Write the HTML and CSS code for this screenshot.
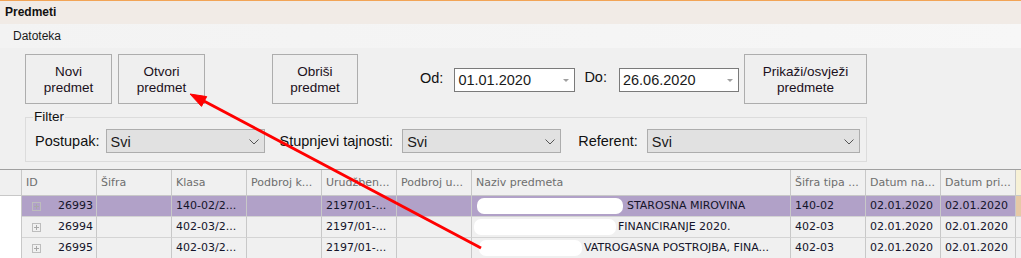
FILE: index.html
```html
<!DOCTYPE html>
<html lang="hr">
<head>
  <meta charset="UTF-8">
  <title>Predmeti</title>
  <link rel="stylesheet" href="styles.css">
</head>
<body>
  <div class="window">
    <div class="titlebar">Predmeti</div>
    <div class="menubar"><span class="menu-item">Datoteka</span></div>

    <div class="toolbar">
      <button class="btn">Novi<br>predmet</button>
      <button class="btn btn-open">Otvori<br>predmet</button>
      <button class="btn btn-delete">Obriši<br>predmet</button>
      <label class="lbl lbl-od">Od:</label>
      <div class="date">01.01.2020<span class="date-arrow"></span></div>
      <label class="lbl lbl-do">Do:</label>
      <div class="date date-do">26.06.2020<span class="date-arrow"></span></div>
      <button class="btn btn-refresh">Prikaži/osvježi<br>predmete</button>
    </div>

    <fieldset class="filter">
      <legend>Filter</legend>
      <label class="lbl">Postupak:</label>
      <div class="combo combo-postupak">Svi<svg class="chev" width="10" height="6" viewBox="0 0 10 6"><polyline points="0.5,0.5 5,5 9.5,0.5" fill="none" stroke="#555" stroke-width="1"/></svg></div>
      <label class="lbl lbl-tajnost">Stupnjevi tajnosti:</label>
      <div class="combo combo-tajnost">Svi<svg class="chev" width="10" height="6" viewBox="0 0 10 6"><polyline points="0.5,0.5 5,5 9.5,0.5" fill="none" stroke="#555" stroke-width="1"/></svg></div>
      <label class="lbl lbl-referent">Referent:</label>
      <div class="combo combo-referent">Svi<svg class="chev" width="10" height="6" viewBox="0 0 10 6"><polyline points="0.5,0.5 5,5 9.5,0.5" fill="none" stroke="#555" stroke-width="1"/></svg></div>
    </fieldset>

    <div class="grid">
      <div class="row head">
        <div class="cell rh"></div>
        <div class="cell">ID</div>
        <div class="cell">Šifra</div>
        <div class="cell">Klasa</div>
        <div class="cell">Podbroj k...</div>
        <div class="cell">Urudžben...</div>
        <div class="cell">Podbroj u...</div>
        <div class="cell">Naziv predmeta</div>
        <div class="cell">Šifra tipa ...</div>
        <div class="cell">Datum na...</div>
        <div class="cell">Datum pri...</div>
        <div class="cell more"></div>
      </div>
      <div class="row selected">
        <div class="cell rh"></div>
        <div class="cell id"><span class="expand"></span>26993</div>
        <div class="cell"></div>
        <div class="cell">140-02/2...</div>
        <div class="cell"></div>
        <div class="cell">2197/01-...</div>
        <div class="cell"></div>
        <div class="cell naziv"><span class="blur blur-1"></span>STAROSNA MIROVINA</div>
        <div class="cell">140-02</div>
        <div class="cell">02.01.2020</div>
        <div class="cell">02.01.2020</div>
        <div class="cell more"></div>
      </div>
      <div class="row">
        <div class="cell rh"></div>
        <div class="cell id"><span class="expand"></span>26994</div>
        <div class="cell"></div>
        <div class="cell">402-03/2...</div>
        <div class="cell"></div>
        <div class="cell">2197/01-...</div>
        <div class="cell"></div>
        <div class="cell naziv"><span class="blur blur-2"></span>FINANCIRANJE 2020.</div>
        <div class="cell">402-03</div>
        <div class="cell">02.01.2020</div>
        <div class="cell">02.01.2020</div>
        <div class="cell more"></div>
      </div>
      <div class="row">
        <div class="cell rh"></div>
        <div class="cell id"><span class="expand"></span>26995</div>
        <div class="cell"></div>
        <div class="cell">402-03/2...</div>
        <div class="cell"></div>
        <div class="cell">2197/01-...</div>
        <div class="cell"></div>
        <div class="cell naziv"><span class="blur blur-3"></span>VATROGASNA POSTROJBA, FINA...</div>
        <div class="cell">402-03</div>
        <div class="cell">02.01.2020</div>
        <div class="cell">02.01.2020</div>
        <div class="cell more"></div>
      </div>
    </div>

    <!-- strelica preko svega -->
    <svg class="arrow" width="1021" height="258" viewBox="0 0 1021 258">
      <line x1="481" y1="248" x2="202" y2="100" stroke="#ff0000" stroke-width="3"/>
      <polygon points="190,94 201.5,106.4 206.7,96.6" fill="#ff0000" stroke="#ff0000" stroke-width="1"/>
    </svg>
  </div>
</body>
</html>
```

FILE: styles.css
```css
* {
  margin: 0;
  padding: 0;
  box-sizing: border-box;
}

body {
  width: 1021px;
  height: 258px;
  overflow: hidden;
  background: #f0f0f0;
  font-family: "Liberation Sans", Arial, sans-serif;
  color: #1a1a1a;
}

.window {
  position: relative;
  height: 258px;
}

.titlebar {
  height: 24px;
  border-top: 1px solid #f2a456;
  background: #f1ebe6;
  font-size: 12px;
  font-weight: bold;
  line-height: 22px;
  padding-left: 5px;
  color: #111;
}

.menubar {
  height: 24px;
  background: linear-gradient(to right, #f3f3f3, #f5f5f5 60%, #f7f7f7);
  font-size: 12px;
  line-height: 24px;
  padding-left: 13px;
}

/* gornji red s gumbima */
.toolbar {
  display: flex;
  align-items: center;
  height: 50px;
  margin-top: 6px;
  padding-left: 25px;
}

.btn {
  width: 87px;
  height: 50px;
  background: #efefef;
  border: 1px solid #adadad;
  font-family: "Liberation Sans", Arial, sans-serif;
  font-size: 13.5px;
  line-height: 16px;
  padding-top: 1px;
  color: #1b1020;
}

.btn-open {
  margin-left: 6px;
}

.btn-delete {
  width: 86px;
  margin-left: 67px;
}

.btn-refresh {
  width: 123px;
  margin-left: 5px;
}

.lbl {
  font-size: 14.5px;
  color: #111;
  white-space: nowrap;
}

.lbl-od {
  margin-left: 62px;
  margin-top: -2px;
}

.lbl-do {
  margin-left: 9px;
  margin-top: -5px;
}

.date {
  position: relative;
  width: 121px;
  height: 24px;
  margin-left: 11px;
  margin-top: 2px;
  background: #fff;
  border: 1px solid #7a7a7a;
  font-size: 14.5px;
  line-height: 22px;
  padding-left: 3px;
}

.date-do {
  width: 120px;
  margin-left: 12px;
}

.date-arrow {
  position: absolute;
  right: 5px;
  top: 10px;
  border-left: 3px solid transparent;
  border-right: 3px solid transparent;
  border-top: 3px solid #a0a0a0;
}

/* filter grupa */
.filter {
  display: flex;
  align-items: center;
  width: 842px;
  height: 53px;
  margin: 5px 0 0 25px;
  border: 1px solid #dcdcdc;
  padding: 0 0 4px 9px;
}

.filter legend {
  font-size: 13.5px;
  line-height: 16px;
  margin-left: -2px;
  padding: 0 1px;
  color: #111;
}

.combo {
  position: relative;
  width: 159px;
  height: 24px;
  margin-left: 6px;
  background: #e1e1e1;
  border: 1px solid #adadad;
  font-size: 14.5px;
  line-height: 24px;
  padding-left: 4px;
}

.combo-tajnost {
  margin-left: 9px;
}

.combo-referent {
  width: 213px;
  margin-left: 9px;
}

.lbl-tajnost {
  margin-left: 15px;
}

.lbl-referent {
  margin-left: 17px;
}

.chev {
  position: absolute;
  right: 5px;
  top: 9px;
}

/* tablica predmeta */
.grid {
  margin-top: 7px;
  border-top: 1px solid #a0a0a0;
  font-family: "DejaVu Sans", Verdana, sans-serif;
  font-size: 11px;
}

.row {
  display: grid;
  grid-template-columns: 22px 75px 75px 75px 75px 75px 75px 319px 75px 75px 75px 1fr;
  height: 21px;
  background: #f0f0f0;
  color: #14142a;
}

.row.head {
  height: 26px;
  color: #6e6e6e;
  border-bottom: 1px solid #c8c8c8;
}

.cell {
  border-right: 1px solid #c8c8c8;
  border-bottom: 1px solid #d4d4d4;
  padding: 0 4px;
  line-height: 20px;
  white-space: nowrap;
  overflow: hidden;
}

.head .cell {
  line-height: 25px;
  border-bottom: none;
}

.row .rh {
  background: #fff;
  border-right: 1px solid #c8c8c8;
  border-bottom: none;
}

.head .rh {
  background: #f0f0f0;
}

.selected {
  background: #b1a1c8;
}

.cell.more {
  border-right: none;
}

.head .more {
  background: #f7f1d6;
}

.selected .more {
  background: #e6c9a6;
}

.id {
  display: flex;
  align-items: center;
  justify-content: space-between;
  padding: 0 3px 0 10px;
}

.expand {
  position: relative;
  width: 9px;
  height: 9px;
  border: 1px solid #bdbdbd;
}

.expand::before {
  content: "";
  position: absolute;
  left: 1px;
  top: 3px;
  width: 5px;
  height: 1px;
  background: #a8a8a8;
}

.expand::after {
  content: "";
  position: absolute;
  left: 3px;
  top: 1px;
  width: 1px;
  height: 5px;
  background: #a8a8a8;
}

.naziv {
  display: flex;
  align-items: center;
  padding-left: 2px;
}

.blur {
  display: inline-block;
  height: 16px;
  background: #fff;
  border-radius: 7px;
  margin-right: 4px;
}

.blur-1 {
  width: 146px;
  margin-left: 3px;
}

.blur-2 {
  width: 142px;
  margin-left: 0;
  margin-right: 2px;
}

.blur-3 {
  width: 103px;
  margin-left: 5px;
  margin-right: 2px;
}

.arrow {
  position: absolute;
  left: 0;
  top: 0;
  pointer-events: none;
}
```
